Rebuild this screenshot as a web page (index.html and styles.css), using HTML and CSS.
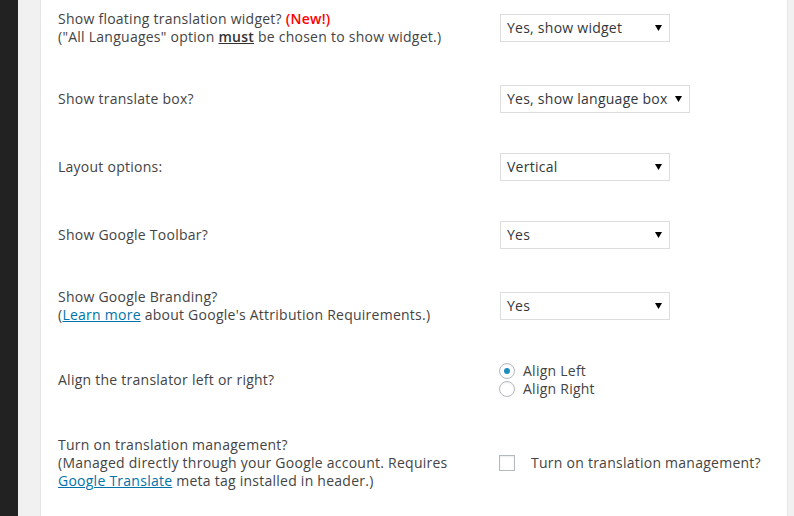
FILE: index.html
```html
<!DOCTYPE html>
<html lang="en">
<head>
<meta charset="utf-8">
<title>Translator settings</title>
<link rel="stylesheet" href="styles.css">
</head>
<body>
<div class="adminmenu"></div>
<div class="main">
  <div class="panel">
    <div class="table">
      <div class="row">
        <div class="label">Show floating translation widget? <span class="new">(New!)</span><br>("All Languages" option <u class="must">must</u> be chosen to show widget.)</div>
        <div class="control"><div class="select w170"><span>Yes, show widget</span><svg class="arrow" width="7" height="6" viewBox="0 0 7 6"><polygon points="0,0 7,0 3.5,6" fill="#000"/></svg></div></div>
      </div>
      <div class="row">
        <div class="label">Show translate box?</div>
        <div class="control"><div class="select w190"><span>Yes, show language box</span><svg class="arrow" width="7" height="6" viewBox="0 0 7 6"><polygon points="0,0 7,0 3.5,6" fill="#000"/></svg></div></div>
      </div>
      <div class="row">
        <div class="label">Layout options:</div>
        <div class="control"><div class="select w170"><span>Vertical</span><svg class="arrow" width="7" height="6" viewBox="0 0 7 6"><polygon points="0,0 7,0 3.5,6" fill="#000"/></svg></div></div>
      </div>
      <div class="row">
        <div class="label">Show Google Toolbar?</div>
        <div class="control"><div class="select w170"><span>Yes</span><svg class="arrow" width="7" height="6" viewBox="0 0 7 6"><polygon points="0,0 7,0 3.5,6" fill="#000"/></svg></div></div>
      </div>
      <div class="row">
        <div class="label">Show Google Branding?<br>(<a href="#">Learn more</a> about Google's Attribution Requirements.)</div>
        <div class="control"><div class="select w170"><span>Yes</span><svg class="arrow" width="7" height="6" viewBox="0 0 7 6"><polygon points="0,0 7,0 3.5,6" fill="#000"/></svg></div></div>
      </div>
      <div class="row">
        <div class="label">Align the translator left or right?</div>
        <div class="control">
          <div class="radio-line"><span class="radio checked"></span><span>Align Left</span></div>
          <div class="radio-line"><span class="radio"></span><span>Align Right</span></div>
        </div>
      </div>
      <div class="row">
        <div class="label">Turn on translation management?<br>(Managed directly through your Google account. Requires<br><a href="#">Google Translate</a> meta tag installed in header.)</div>
        <div class="control">
          <div class="check-line"><span class="checkbox"></span><span>Turn on translation management?</span></div>
        </div>
      </div>
    </div>
  </div>
</div>
</body>
</html>
```
FILE: styles.css
```css
html, body {
  margin: 0;
  padding: 0;
  height: 100%;
}
body {
  display: flex;
  background: #f1f1f1;
  font-family: "Open Sans", "Liberation Sans", sans-serif;
  font-size: 14px;
  letter-spacing: 0.25px;
  color: #444;
  overflow: hidden;
}
.adminmenu {
  width: 18px;
  flex: none;
  background: #222;
}
.main {
  flex: 1;
  padding: 0 6px 0 22px;
  display: flex;
}
.panel {
  flex: 1;
  background: #fff;
  border-left: 1px solid #e5e5e5;
  border-right: 1px solid #e5e5e5;
  padding-left: 17px;
  overflow: hidden;
}
.table {
  margin-top: -9px;
}
.row {
  display: grid;
  grid-template-columns: 442px 1fr;
  align-items: center;
  padding: 19px 0;
}
.label {
  line-height: 18px;
}
.new {
  color: #f00;
  font-weight: 600;
}
.must {
  font-weight: 600;
  color: #333;
}
a {
  color: #0073aa;
  text-decoration: underline;
}
.select {
  box-sizing: border-box;
  height: 28px;
  margin: 1px 0;
  border: 1px solid #ddd;
  background: #fff;
  color: #32373c;
  display: flex;
  align-items: center;
  justify-content: space-between;
  padding: 0 7px 0 6px;
  line-height: 26px;
}
.w170 { width: 170px; }
.w190 { width: 190px; }
.arrow {
  display: block;
  flex: none;
}
.radio-line, .check-line {
  display: flex;
  align-items: center;
  line-height: 18px;
  color: #444;
  margin-left: -1px;
}
.radio {
  box-sizing: border-box;
  width: 16px;
  height: 16px;
  border: 1px solid #b4b9be;
  border-radius: 50%;
  margin-right: 8px;
  box-shadow: inset 0 1px 2px rgba(0,0,0,0.07);
  display: flex;
  align-items: center;
  justify-content: center;
  background: #fff;
}
.radio.checked::after {
  content: "";
  width: 6px;
  height: 6px;
  border-radius: 50%;
  background: #1e8cbe;
}
.checkbox {
  box-sizing: border-box;
  width: 16px;
  height: 16px;
  border: 1px solid #b4b9be;
  background: #fff;
  box-shadow: inset 0 1px 2px rgba(0,0,0,0.07);
  margin-right: 16px;
}
```
